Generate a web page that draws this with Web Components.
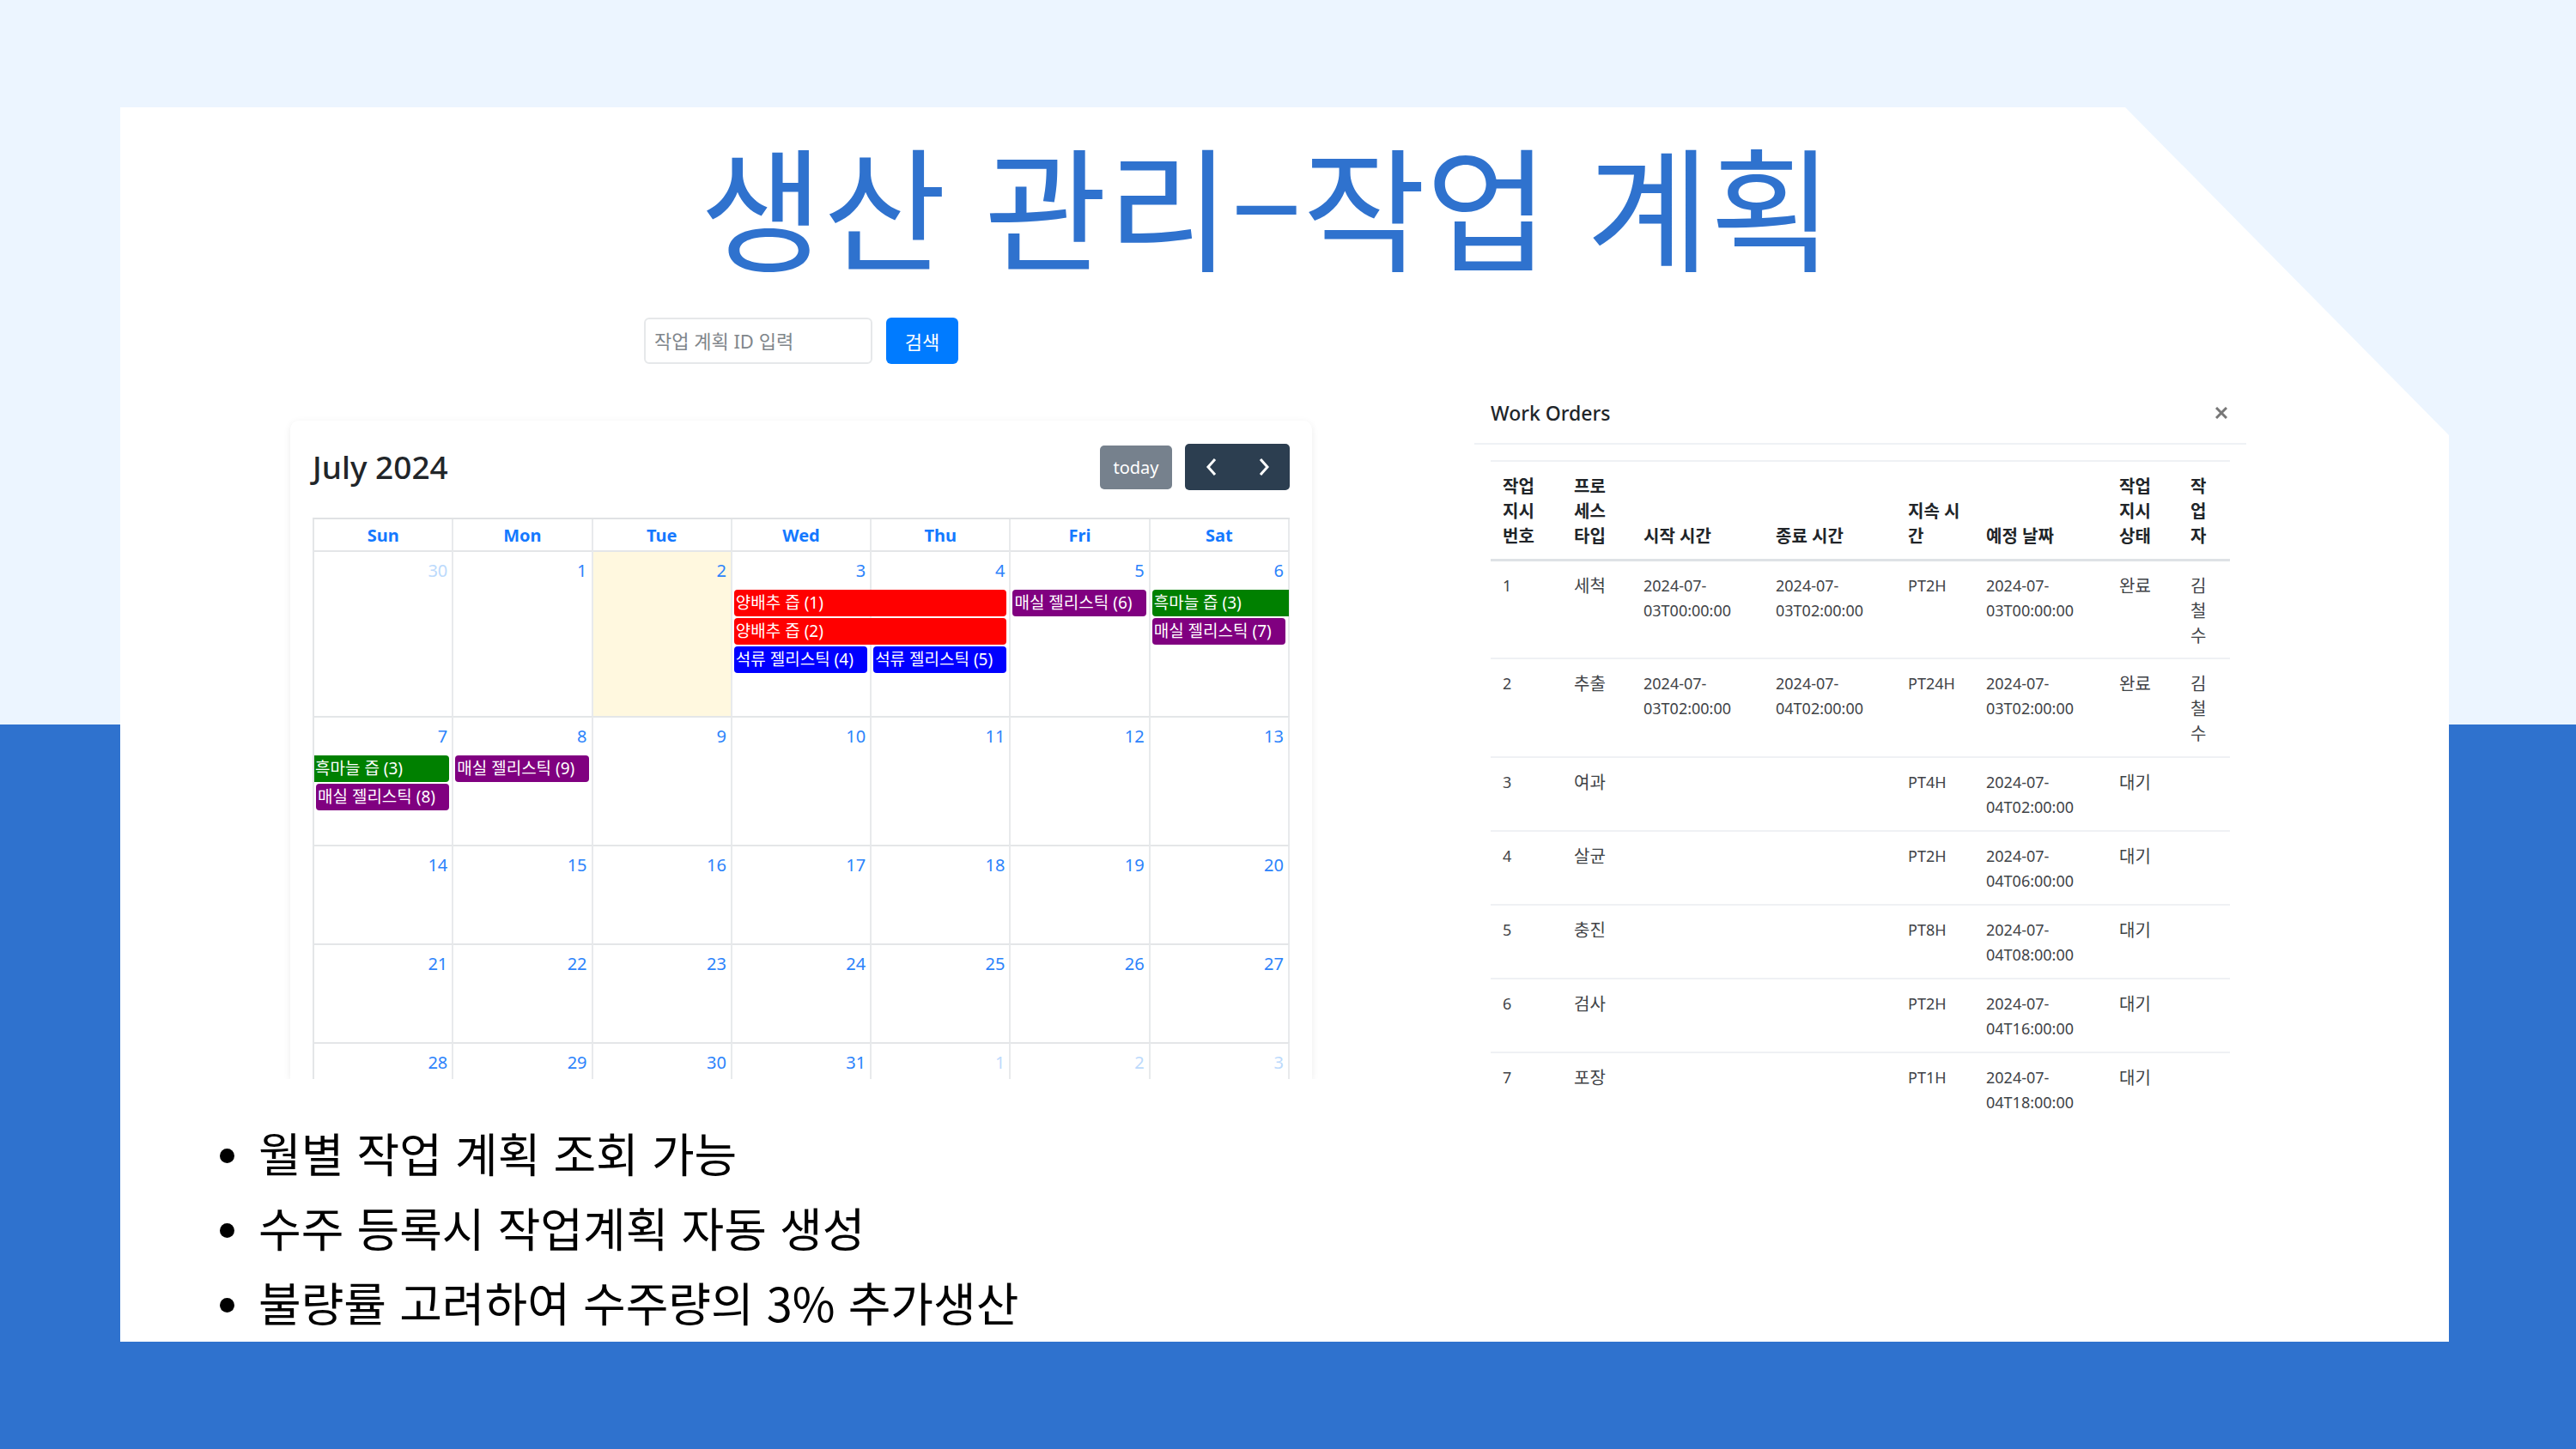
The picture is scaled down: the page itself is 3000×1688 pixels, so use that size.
<!DOCTYPE html>
<html lang="ko">
<head>
<meta charset="utf-8">
<title>생산 관리–작업 계획</title>
<style>
  body { margin: 0; font-family: "Noto Sans", "Noto Sans CJK KR", sans-serif; color: #212529; }
</style>
</head>
<body>
<plan-slide>
  <span slot="title">생산 관리–작업 계획</span>
  <plan-search slot="left"></plan-search>
  <month-calendar slot="left"></month-calendar>
  <work-orders slot="right"></work-orders>
  <feature-list slot="notes">
    <feature-item>월별 작업 계획 조회 가능</feature-item>
    <feature-item>수주 등록시 작업계획 자동 생성</feature-item>
    <feature-item>불량률 고려하여 수주량의 3% 추가생산</feature-item>
  </feature-list>
</plan-slide>

<script>
function define(name, html, setup) {
  customElements.define(name, class extends HTMLElement {
    connectedCallback() {
      if (this.shadowRoot) return;
      const root = this.attachShadow({ mode: "open" });
      const t = document.createElement("template");
      t.innerHTML = html;
      root.append(t.content.cloneNode(true));
      if (setup) setup(root, this);
    }
  });
}

define("plan-slide", `
  <style>
    :host { display: flex; box-sizing: border-box; min-height: 100vh; padding: 125px 148px 125px 140px;
      background: linear-gradient(#ecf5ff 50%, #2f72ce 50%); }
    .card { flex: 1; background: #fff;
      clip-path: polygon(0 0, calc(100% - 377px) 0, 100% 382px, 100% 100%, 0 100%); }
    h1 { margin: 0; padding: 0 42px 22px 0; text-align: center; color: #2f72ce; font-size: 156px; font-weight: 400;
      line-height: 223px; font-family: "Noto Sans CJK KR", sans-serif; }
    main { display: grid; grid-template-columns: 1190fr 899fr; column-gap: 189px; padding: 0 236px 0 198px; align-items: start; }
    .left { min-width: 0; }
    .right { min-width: 0; padding-top: 82px; }
  </style>
  <div class="card">
    <h1><slot name="title"></slot></h1>
    <main>
      <div class="left"><slot name="left"></slot></div>
      <div class="right"><slot name="right"></slot></div>
    </main>
    <slot name="notes"></slot>
  </div>`);

define("plan-search", `
  <style>
    :host { display: block; margin-bottom: 66px; }
    form { display: flex; justify-content: center; gap: 16px; }
    input, button { box-sizing: border-box; height: 54px; font-family: inherit; font-size: 22px; border-radius: 6px; }
    input { width: 266px; padding: 0 10px; border: 2px solid #e6e8ea; background: #fff; color: #212529; }
    input::placeholder { color: #80868b; opacity: 1; }
    button { width: 84px; padding: 0; border: 0; background: #007bff; color: #fff; }
  </style>
  <form onsubmit="return false">
    <input type="text" aria-label="작업 계획 ID" placeholder="작업 계획 ID 입력">
    <button type="submit">검색</button>
  </form>`);

define("calendar-event", `
  <style>
    :host { display: block; box-sizing: border-box; height: 31px; margin: 0 5px 2px 2px; padding-left: 2px;
      border-radius: 4px; color: #fff; font-size: 19px; line-height: 31px; white-space: nowrap; overflow: hidden; }
    :host([color=red]) { background: #f00; }
    :host([color=blue]) { background: #00f; }
    :host([color=purple]) { background: #800080; }
    :host([color=green]) { background: #008000; }
    :host([open=end]) { margin-right: 1px; border-radius: 4px 0 0 4px; }
    :host([open=start]) { margin-left: 0; border-radius: 0 4px 4px 0; padding-left: 1px; }
  </style>
  <slot></slot>`);

define("month-calendar", `
  <style>
    :host { display: block; padding: 27px 26px 0; border-radius: 10px 10px 0 0;
      box-shadow: 0 2px 8px rgba(0, 0, 0, .08); clip-path: inset(-12px -12px 0 -12px); }
    header { display: flex; align-items: center; justify-content: space-between; height: 54px; margin-bottom: 32px; }
    h2 { margin: 0; font-size: 37px; font-weight: 500; line-height: 58px; }
    .tools { display: flex; align-items: center; gap: 15px; }
    button { border: 0; padding: 0; color: #fff; font-family: inherit; font-size: 20px; background: #2c3e50; }
    .today { width: 84px; height: 51px; border-radius: 5px; background: #76818d; }
    .nav { display: flex; }
    .nav button { width: 61px; height: 54px; display: grid; place-items: center; }
    .nav button:first-child { border-radius: 5px 0 0 5px; }
    .nav button:last-child { border-radius: 0 5px 5px 0; }
    svg { width: 14px; height: 22px; fill: none; stroke: #fff; stroke-width: 3; }
    .row { display: grid; grid-template-columns: repeat(7, 1fr); border-left: 2px solid #e4e6e8; }
    .head { grid-template-rows: 36px; border-top: 2px solid #e0e2e4; }
    .head span { text-align: center; font-size: 20px; font-weight: 700; line-height: 38px; color: #1479ff; border-right: 2px solid #e8eaec; }
    .cell { grid-row: 1 / span 5; border-right: 2px solid #e8eaec; border-top: 2px solid #e4e6e8; }
    .cell.now { background: #fff8df; }
    .num { grid-row: 1; text-align: right; padding: 2px 7px 0 0; font-size: 20px; line-height: 43px; color: #2c83fb; }
    .num.out { color: #bcdafc; }
  </style>
  <header>
    <h2>July 2024</h2>
    <div class="tools">
      <button class="today" type="button">today</button>
      <div class="nav">
        <button type="button" aria-label="Previous month"><svg viewBox="0 0 14 22"><path d="M11 2 3 11l8 9"/></svg></button>
        <button type="button" aria-label="Next month"><svg viewBox="0 0 14 22"><path d="m3 2 8 9-8 9"/></svg></button>
      </div>
    </div>
  </header>
  <div class="row head"><span>Sun</span><span>Mon</span><span>Tue</span><span>Wed</span><span>Thu</span><span>Fri</span><span>Sat</span></div>
  <div id="weeks"></div>`, root => {
  // Each event: column, span, lane, colour, label, open side
  const weeks = [
    { h: 193, days: [30, 1, 2, 3, 4, 5, 6], events: [
      [4, 2, 1, "red", "양배추 즙 (1)"], [4, 2, 2, "red", "양배추 즙 (2)"],
      [4, 1, 3, "blue", "석류 젤리스틱 (4)"], [5, 1, 3, "blue", "석류 젤리스틱 (5)"],
      [6, 1, 1, "purple", "매실 젤리스틱 (6)"], [7, 1, 1, "green", "흑마늘 즙 (3)", "end"],
      [7, 1, 2, "purple", "매실 젤리스틱 (7)"]] },
    { h: 150, days: [7, 8, 9, 10, 11, 12, 13], events: [
      [1, 1, 1, "green", "흑마늘 즙 (3)", "start"], [1, 1, 2, "purple", "매실 젤리스틱 (8)"],
      [2, 1, 1, "purple", "매실 젤리스틱 (9)"]] },
    { h: 115, days: [14, 15, 16, 17, 18, 19, 20], events: [] },
    { h: 115, days: [21, 22, 23, 24, 25, 26, 27], events: [] },
    { h: 43, days: [28, 29, 30, 31, 1, 2, 3], events: [] }
  ];
  root.getElementById("weeks").innerHTML = weeks.map((w, wi) => {
    const cells = w.days.map((d, i) => {
      const out = (wi === 0 && d > 7) || (wi === 4 && d < 7);
      const now = wi === 0 && d === 2;
      return `<div class="cell${now ? " now" : ""}" style="grid-column:${i + 1}"></div>` +
        `<div class="num${out ? " out" : ""}" style="grid-column:${i + 1}">${d}</div>`;
    }).join("");
    const events = w.events.map(([c, s, lane, color, label, open]) =>
      `<calendar-event color="${color}" ${open ? `open="${open}"` : ""} style="grid-column:${c} / span ${s};grid-row:${lane + 1}">${label}</calendar-event>`).join("");
    const rows = wi === 4 ? "43px" : "46px auto auto auto 1fr";
    return `<div class="row" style="height:${w.h}px;grid-template-rows:${rows}">${cells}${events}</div>`;
  }).join("");
});

define("work-orders", `
  <style>
    :host { display: block; }
    header { display: flex; align-items: center; justify-content: space-between; height: 58px; padding: 0 19px 6px; border-bottom: 2px solid #eff2f5; }
    h3 { margin: 0; font-size: 23px; font-weight: 500; line-height: 30px; }
    header button { display: grid; place-items: center; width: 20px; height: 20px; padding: 0; border: 0; background: none; }
    svg { width: 14px; height: 14px; stroke: #777; stroke-width: 3; }
    .body { padding: 18px 19px 0; }
    table { width: 100%; border-collapse: separate; border-spacing: 0; table-layout: fixed; }
    th, td { padding: 14px 14px 12px; text-align: left; font-size: 18px; line-height: 29px; border-top: 2px solid #eff1f4; vertical-align: top; }
    th { font-size: 20px; font-weight: 700; vertical-align: bottom; border-bottom: 1px solid #dee2e6; }
    td { color: #3f4347; }
    .ko { font-size: 20px; }
    tbody tr:first-child td { border-top-color: #dee2e6; padding-bottom: 11px; }
    tbody tr:last-child td { padding-bottom: 0; }
  </style>
  <header>
    <h3>Work Orders</h3>
    <button type="button" aria-label="Close"><svg viewBox="0 0 14 14"><path d="m1 1 12 12M13 1 1 13"/></svg></button>
  </header>
  <div class="body">
    <table>
      <colgroup></colgroup>
      <thead><tr></tr></thead>
      <tbody></tbody>
    </table>
  </div>`, root => {
  const widths = [83, 81, 154, 154, 91, 155, 83, 60];
  const total = widths.reduce((a, b) => a + b);
  const heads = ["작업 지시 번호", "프로세스 타입", "시작 시간", "종료 시간", "지속 시간", "예정 날짜", "작업 지시 상태", "작업자"];
  const rows = [
    ["1", "세척", "2024-07-03T00:00:00", "2024-07-03T02:00:00", "PT2H", "2024-07-03T00:00:00", "완료", "김철수"],
    ["2", "추출", "2024-07-03T02:00:00", "2024-07-04T02:00:00", "PT24H", "2024-07-03T02:00:00", "완료", "김철수"],
    ["3", "여과", "", "", "PT4H", "2024-07-04T02:00:00", "대기", ""],
    ["4", "살균", "", "", "PT2H", "2024-07-04T06:00:00", "대기", ""],
    ["5", "충진", "", "", "PT8H", "2024-07-04T08:00:00", "대기", ""],
    ["6", "검사", "", "", "PT2H", "2024-07-04T16:00:00", "대기", ""],
    ["7", "포장", "", "", "PT1H", "2024-07-04T18:00:00", "대기", ""]
  ];
  root.querySelector("colgroup").innerHTML = widths.map(w => `<col style="width:calc(100% * ${w} / ${total})">`).join("");
  root.querySelector("thead tr").innerHTML = heads.map(h => `<th scope="col">${h}</th>`).join("");
  root.querySelector("tbody").innerHTML = rows.map(r => `<tr>${r.map((c, i) =>
    `<td${[1, 6, 7].includes(i) ? ' class="ko"' : ""}>${c.replace("07-", "07-<wbr>")}</td>`).join("")}</tr>`).join("");
});

define("feature-list", `
  <style>
    :host { display: block; padding-left: 116px; }
  </style>
  <div role="list"><slot></slot></div>`);

define("feature-item", `
  <style>
    :host { display: flex; align-items: center; gap: 28px; color: #000; font-family: "Noto Sans CJK KR", sans-serif;
      font-size: 54px; line-height: 87px; }
    :host::before { content: ""; width: 17px; height: 17px; border-radius: 50%; background: #000; margin-top: 8px; }
  </style>
  <slot></slot>`, (root, el) => el.setAttribute("role", "listitem"));
</script>
</body>
</html>
